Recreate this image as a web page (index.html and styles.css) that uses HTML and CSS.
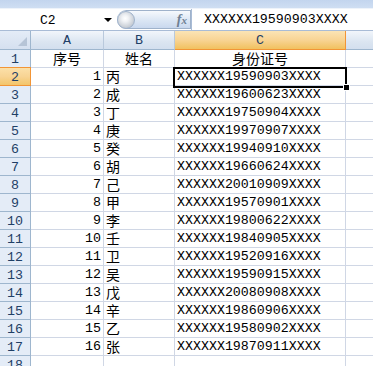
FILE: index.html
```html
<!DOCTYPE html>
<html>
<head>
<meta charset="utf-8">
<link rel="stylesheet" href="styles.css">
</head>
<body>
<div class="app">
  <div class="ribbon-edge"></div>
  <div class="fbar">
    <div class="namebox"><span class="nb-text">C2</span><span class="nb-arrow"></span></div>
    <div class="fxpill"><span class="knob"></span><span class="fx">f<span class="fxx">x</span></span></div>
    <div class="finput"><span class="mono">XXXXXX19590903XXXX</span></div>
  </div>
  <div class="sheet">
    <div class="grid" id="grid">
      <div class="corner"><span class="tri"></span></div>
      <div class="ch">A</div>
      <div class="ch">B</div>
      <div class="ch sel">C</div>
      <div class="ch last"></div>
    </div>
    <div class="selbox"><span class="handle"></span></div>
  </div>
</div>
<script>
(function(){
  var g=document.getElementById('grid');
  var names=['丙','成','丁','庚','癸','胡','己','甲','李','壬','卫','吴','戊','辛','乙','张'];
  var ids=['19590903','19600623','19750904','19970907','19940910','19660624','20010909','19570901','19800622','19840905','19520916','19590915','20080908','19860906','19580902','19870911'];
  var h='';
  h+='<div class="rh">1</div><div class="c ctr cjk">序号</div><div class="c ctr cjk">姓名</div><div class="c ctr cjk">身份证号</div><div class="c last"></div>';
  for(var i=0;i<16;i++){
    var r=i+2;
    h+='<div class="rh'+(r===2?' sel':'')+'">'+r+'</div>';
    h+='<div class="c num mono">'+(i+1)+'</div>';
    h+='<div class="c cjk name">'+names[i]+'</div>';
    h+='<div class="c mono id">XXXXXX'+ids[i]+'XXXX</div>';
    h+='<div class="c last"></div>';
  }
  h+='<div class="rh">18</div><div class="c"></div><div class="c"></div><div class="c"></div><div class="c last"></div>';
  g.insertAdjacentHTML('beforeend',h);
})();
</script>
</body>
</html>
```
FILE: styles.css
```css
html,body{margin:0;padding:0;background:#fff;}
body{width:373px;height:366px;overflow:hidden;font-family:"Liberation Mono","Noto Sans CJK SC",monospace;}
.app{width:373px;height:366px;overflow:hidden;}
.ribbon-edge{height:8px;background:linear-gradient(#c3d5ee,#cfdef2);border-bottom:1px solid #eef3fa;}
.fbar{height:21px;display:flex;align-items:stretch;background:#fff;border-bottom:1px solid #a9bcd6;}
.namebox{width:113px;position:relative;display:flex;align-items:center;}
.nb-text{font-family:"Liberation Mono",monospace;font-size:13px;color:#000;margin-left:40px;margin-top:1px;}
.nb-arrow{position:absolute;left:104px;top:9px;width:0;height:0;border-left:4px solid transparent;border-right:4px solid transparent;border-top:4px solid #000;}
.fxpill{width:74px;margin:1px 0 1px 4px;border:1px solid #9fb2cb;border-left:none;border-radius:10px 0 0 10px;background:linear-gradient(#f6f9fd,#dbe6f4 55%,#c9d8ee);position:relative;box-sizing:border-box;}
.knob{position:absolute;left:0;top:0;width:18px;height:18px;border-radius:50%;border:1px solid #9fb2cb;box-sizing:border-box;background:radial-gradient(circle at 45% 40%,#fff 0,#f0f2f5 25%,#c6ccd4 70%,#aeb8c6 100%);}
.fx{position:absolute;right:3px;top:0;font-family:"Liberation Serif",serif;font-style:italic;font-weight:bold;font-size:14px;color:#6f7f92;line-height:18px;}
.fxx{font-size:11px;}
.finput{flex:1;border-left:1px solid #a9bcd6;display:flex;align-items:center;padding-left:12px;}
.finput .mono{font-size:13.3px;color:#000;}
.sheet{position:relative;}
.grid{display:grid;grid-template-columns:31px 73px 71px 171px 27px;grid-template-rows:19px repeat(18,18px);}
.corner{background:linear-gradient(#e4ecf7,#d5e0ef);border-right:1px solid #9eb6ce;border-bottom:1px solid #9eb6ce;box-sizing:border-box;position:relative;}
.tri{position:absolute;right:3px;bottom:3px;width:0;height:0;border-left:9px solid transparent;border-bottom:9px solid #b6c4d6;}
.ch{background:linear-gradient(#f2f6fb,#dbe5f1 60%,#d3dfee);border-right:1px solid #b9c9dc;border-bottom:1px solid #9eb6ce;box-sizing:border-box;display:flex;align-items:center;justify-content:center;font-family:"Liberation Mono",monospace;font-size:13.3px;color:#1f3f66;padding-top:1px;}
.ch.sel{background:linear-gradient(#fbe4b5,#f8d494 50%,#f1c15f);border-right:1px solid #f29536;border-bottom:1px solid #f29536;}
.ch.last{border-right:none;}
.rh{background:#e4ecf7;border-right:1px solid #9eb6ce;border-bottom:1px solid #9eb6ce;box-sizing:border-box;display:flex;align-items:center;justify-content:center;font-family:"Liberation Mono",monospace;font-size:13.3px;color:#1f3f66;padding-top:1px;overflow:hidden;}
.rh.sel{background:linear-gradient(#fbe0a8,#f8d494 50%,#f3c56a);border-bottom:1px solid #f29536;border-right:1px solid #f29536;border-top:1px solid #f29536;margin-top:-1px;}
.c{border-right:1px solid #d0d7e5;border-bottom:1px solid #d0d7e5;box-sizing:border-box;display:flex;align-items:flex-end;padding-bottom:1px;font-size:13.3px;color:#000;white-space:nowrap;overflow:visible;line-height:15px;}
.c.last{border-right:none;}
.ctr{justify-content:center;}
.cjk{font-family:"Noto Sans CJK SC",sans-serif;font-size:14px;line-height:16px;padding-bottom:1px;}
.num{justify-content:flex-end;padding-right:2px;}
.name{padding-left:2px;}
.id{padding-left:2px;}
.mono{font-family:"Liberation Mono",monospace;}
.selbox{position:absolute;left:173px;top:36px;width:174px;height:21px;border:2px solid #000;box-sizing:border-box;}
.handle{position:absolute;right:-5px;bottom:-5px;width:5px;height:5px;background:#000;border:1px solid #fff;}
```
